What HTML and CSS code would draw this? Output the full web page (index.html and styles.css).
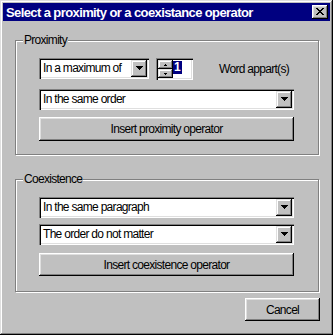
FILE: index.html
```html
<!DOCTYPE html>
<html lang="en">
<head>
    <meta charset="UTF-8">
    <title>Select a proximity or a coexistance operator</title>
    <link rel="stylesheet" href="styles.css">
</head>
<body>
    <div class="window">
        <div class="titlebar">
            <span class="title">Select a proximity or a coexistance operator</span>
            <div class="close">
                <svg width="8" height="7" viewBox="0 0 8 7" shape-rendering="crispEdges"><path d="M0 0h2v1H0z M6 0h2v1H6z M1 1h2v1H1z M5 1h2v1H5z M2 2h4v1H2z M3 3h2v1H3z M2 4h4v1H2z M1 5h2v1H1z M5 5h2v1H5z M0 6h2v1H0z M6 6h2v1H6z" fill="#000"/></svg>
            </div>
        </div>

        <div class="content">
            <div class="group prox">
                <span class="legend">Proximity</span>
                <div class="row">
                    <div class="combo small">
                        <span class="value">In a maximum of</span>
                        <div class="drop"><svg width="7" height="4" viewBox="0 0 7 4" shape-rendering="crispEdges"><path d="M0 0h7v1H0z M1 1h5v1H1z M2 2h3v1H2z M3 3h1v1H3z" fill="#000"/></svg></div>
                    </div>
                    <div class="spin">
                        <div class="spin-btns">
                            <div class="spin-btn"><svg width="3" height="2" viewBox="0 0 3 2" shape-rendering="crispEdges"><path d="M1 0h1v1H1z M0 1h3v1H0z" fill="#000"/></svg></div>
                            <div class="spin-btn"><svg width="3" height="2" viewBox="0 0 3 2" shape-rendering="crispEdges"><path d="M0 0h3v1H0z M1 1h1v1H1z" fill="#000"/></svg></div>
                        </div>
                        <span class="sel">1</span>
                    </div>
                    <span class="label">Word appart(s)</span>
                </div>
                <div class="combo wide gap9">
                    <span class="value">In the same order</span>
                    <div class="drop"><svg width="7" height="4" viewBox="0 0 7 4" shape-rendering="crispEdges"><path d="M0 0h7v1H0z M1 1h5v1H1z M2 2h3v1H2z M3 3h1v1H3z" fill="#000"/></svg></div>
                </div>
                <div class="btn wide tall gap7">Insert proximity operator</div>
            </div>

            <div class="group coex">
                <span class="legend">Coexistence</span>
                <div class="combo wide">
                    <span class="value">In the same paragraph</span>
                    <div class="drop"><svg width="7" height="4" viewBox="0 0 7 4" shape-rendering="crispEdges"><path d="M0 0h7v1H0z M1 1h5v1H1z M2 2h3v1H2z M3 3h1v1H3z" fill="#000"/></svg></div>
                </div>
                <div class="combo wide gap6">
                    <span class="value">The order do not matter</span>
                    <div class="drop"><svg width="7" height="4" viewBox="0 0 7 4" shape-rendering="crispEdges"><path d="M0 0h7v1H0z M1 1h5v1H1z M2 2h3v1H2z M3 3h1v1H3z" fill="#000"/></svg></div>
                </div>
                <div class="btn wide gap8">Insert coexistence operator</div>
            </div>

            <div class="actions">
                <div class="btn cancel">Cancel</div>
            </div>
        </div>
    </div>
</body>
</html>
```

FILE: styles.css
```css
body {
    margin: 0;
    font-family: "Liberation Sans", Arial, sans-serif;
    font-size: 12px;
    letter-spacing: -0.7px;
    color: #000;
    background: #c0c0c0;
}
.window {
    width: 333px;
    height: 335px;
    box-sizing: border-box;
    padding: 3px;
    background: #c0c0c0;
    box-shadow: inset -1px -1px #000, inset 1px 1px #dfdfdf, inset -2px -2px #808080, inset 2px 2px #fff;
    display: flex;
    flex-direction: column;
}
.titlebar {
    height: 18px;
    background: #000080;
    display: flex;
    align-items: center;
    justify-content: space-between;
    padding: 0 2px 0 3px;
}
.title {
    color: #fff;
    font-weight: bold;
    font-size: 13px;
    letter-spacing: -0.6px;
}
.close {
    width: 16px;
    height: 14px;
    box-sizing: border-box;
    background: #c0c0c0;
    box-shadow: inset -1px -1px #000, inset 1px 1px #fff, inset -2px -2px #808080, inset 2px 2px #dfdfdf;
    display: flex;
    align-items: center;
    justify-content: center;
    padding: 0 1px 1px 0;
}
.close svg, .drop svg, .spin-btn svg {
    display: block;
}
.content {
    padding: 19px 10px 0 12px;
    display: flex;
    flex-direction: column;
}
.group {
    position: relative;
    width: 304px;
    box-sizing: border-box;
    border: 1px solid #808080;
    box-shadow: inset 1px 1px #fff, 1px 1px #fff;
    padding: 17px 0 0 23px;
    display: flex;
    flex-direction: column;
}
.prox {
    padding-bottom: 13px;
}
.coex {
    margin-top: 24px;
    padding-bottom: 15px;
}
.legend {
    position: absolute;
    top: -8px;
    left: 7px;
    background: #c0c0c0;
    padding: 0 1px;
    line-height: 14px;
}
.row {
    display: flex;
    align-items: flex-start;
    height: 22px;
}
.combo {
    height: 21px;
    box-sizing: border-box;
    background: #fff;
    box-shadow: inset 1px 1px #808080, inset 2px 2px #000, inset -1px -1px #fff, inset -2px -2px #dfdfdf;
    display: flex;
    align-items: center;
    padding: 2px;
}
.combo .value {
    flex: 1;
    padding-left: 2px;
    line-height: 17px;
}
.small {
    width: 110px;
}
.wide {
    width: 255px;
}
.drop {
    width: 16px;
    height: 17px;
    box-sizing: border-box;
    background: #c0c0c0;
    box-shadow: inset -1px -1px #000, inset 1px 1px #dfdfdf, inset -2px -2px #808080, inset 2px 2px #fff;
    display: flex;
    align-items: center;
    justify-content: center;
    padding-bottom: 1px;
}
.spin {
    margin-left: 7px;
    width: 37px;
    height: 22px;
    box-sizing: border-box;
    background: #fff;
    box-shadow: inset 1px 1px #808080, inset 2px 2px #000, inset -1px -1px #fff, inset -2px -2px #dfdfdf;
    padding: 2px;
    display: flex;
    align-items: flex-start;
}
.spin-btns {
    width: 15px;
    display: flex;
    flex-direction: column;
}
.spin-btn {
    height: 9px;
    box-sizing: border-box;
    background: #c0c0c0;
    box-shadow: inset -1px -1px #000, inset 1px 1px #dfdfdf, inset -2px -2px #808080, inset 2px 2px #fff;
    display: flex;
    align-items: center;
    justify-content: center;
}
.sel {
    margin-top: 1px;
    background: #000080;
    color: #fff;
    font-weight: bold;
    line-height: 13px;
    padding: 0 1px;
    letter-spacing: 0;
}
.label {
    margin-left: 26px;
    line-height: 22px;
}
.btn {
    height: 23px;
    box-sizing: border-box;
    background: #c0c0c0;
    box-shadow: inset -1px -1px #000, inset 1px 1px #fff, inset -2px -2px #808080, inset 2px 2px #dfdfdf;
    display: flex;
    align-items: center;
    justify-content: center;
}
.tall {
    height: 24px;
}
.gap6 { margin-top: 6px; }
.gap7 { margin-top: 7px; }
.gap8 { margin-top: 8px; }
.gap9 { margin-top: 9px; }
.actions {
    display: flex;
    justify-content: flex-end;
    margin-top: 6px;
}
.cancel {
    width: 75px;
}
```
